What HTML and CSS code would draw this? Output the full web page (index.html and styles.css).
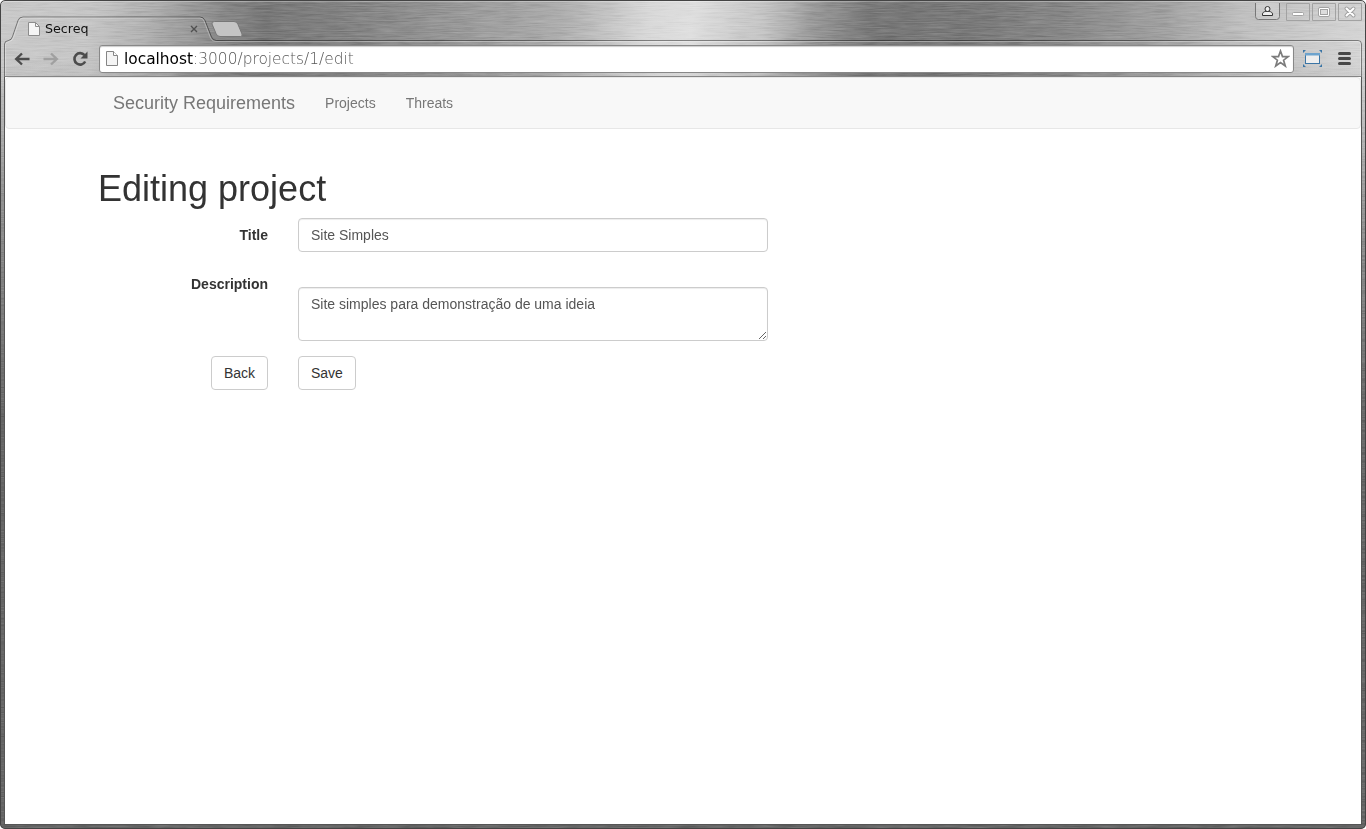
FILE: index.html
```html
<!DOCTYPE html>
<html lang="en">
<head>
<meta charset="utf-8">
<title>Secreq</title>
<link rel="stylesheet" href="styles.css">
</head>
<body>
<div class="window">
  <svg class="metal" width="1366" height="829" aria-hidden="true">
    <defs>
      <filter id="brushed" x="0" y="0" width="100%" height="100%" color-interpolation-filters="sRGB">
        <feTurbulence type="fractalNoise" baseFrequency="0.04 0.8" numOctaves="3" seed="4"/>
        <feColorMatrix values="1 0 0 0 0  1 0 0 0 0  1 0 0 0 0  0 0 0 0 1"/>
      </filter>
    </defs>
    <rect width="1366" height="829" filter="url(#brushed)"/>
  </svg>
  <header class="titlebar">
    <svg class="frame-lines" width="1366" height="77" fill="none" aria-hidden="true">
      <path d="M4.5 77V44q0-3 4-3.500 3-.5 4-4L18 20.500q1-3.500 5-3.500H200q3.500 0 5 3.500L211.500 37q1.500 3.500 5 3.500H1358q3.500 0 3.500 3.500V77" stroke="#000" stroke-opacity=".42"/>
      <path d="M5.500 77V44.500q0-2.500 4-3 3-.5 4-4L19 21.500q1-3.500 4-3.500H200q3 0 4 3L210.500 38q1.500 3.500 5 3.500H1358q2.500 0 2.500 3V77" stroke="#fff" stroke-opacity=".3"/>
      <path d="M214.500 21.500H234q3 0 4 3l4 9.500q.7 2.500-1.500 2.500H220q-3 0-4-3l-4-9.500q-.7-2.500 2.500-2.500Z" fill="#c4c4c4" stroke="#777"/>
    </svg>
    <div class="tab">
      <svg width="12" height="14" viewBox="0 0 12 14"><path d="M.5.5h7l4 4v9H.5Z" fill="#f5f5f5" stroke="#8c8c8c"/><path d="M7.500.5v4h4" fill="none" stroke="#8c8c8c"/></svg>
      <span class="tab-title">Secreq</span>
      <svg class="tab-close" width="8" height="8" viewBox="0 0 8 8"><path d="M1 1l6 6M7 1L1 7" stroke="#505050" stroke-width="1.400"/></svg>
    </div>
    <div class="controls">
      <svg class="user" width="25" height="20" viewBox="0 0 25 20" fill="none"><path d="M.5 0v13.500q0 3 3 3h18q3 0 3-3V0" stroke="#777" fill="#fff" fill-opacity=".15"/><path d="M10.800 8.500h3.400c2 0 3.300 1.300 3.300 2.500v1.500h-10V11c0-1.200 1.300-2.500 3.300-2.500Z" fill="#eee" stroke="#333"/><circle cx="12.500" cy="6" r="2.500" fill="#eee" stroke="#333"/></svg>
      <svg width="24" height="18" viewBox="0 0 24 18" fill="none"><path d="M.5.5h23v17H.5Z" stroke="#a2a2a2"/><rect x="6.500" y="9.500" width="11" height="3" rx="1" fill="#fff" stroke="#a2a2a2"/></svg>
      <svg width="24" height="18" viewBox="0 0 24 18" fill="none"><path d="M.5.5h23v17H.5Z" stroke="#a2a2a2"/><rect x="6.500" y="4.500" width="11" height="9" rx="1.500" fill="#fff" stroke="#a2a2a2"/><rect x="8.500" y="6.500" width="7" height="5" fill="#ddd" stroke="#a2a2a2"/></svg>
      <svg width="24" height="18" viewBox="0 0 24 18" fill="none"><path d="M.5.5h23v17H.5Z" stroke="#a2a2a2"/><path d="M8.500 5.500l7 7M15.500 5.500l-7 7" stroke="#a2a2a2" stroke-width="4" stroke-linecap="round"/><path d="M8.500 5.500l7 7M15.500 5.500l-7 7" stroke="#fff" stroke-width="2" stroke-linecap="round"/></svg>
    </div>
  </header>
  <div class="toolbar">
    <svg class="back" width="16" height="14" viewBox="0 0 16 14" fill="none"><path d="M8 1.500L2.200 7 8 12.500M2 7h13.500" stroke="#4c4c4c" stroke-width="2.400"/></svg>
    <svg class="forward" width="16" height="14" viewBox="0 0 16 14" fill="none"><path d="M8 1.500L13.800 7 8 12.500M14 7H.5" stroke="#a0a0a0" stroke-width="2.400"/></svg>
    <svg class="reload" width="17" height="16" viewBox="0 0 17 16" fill="none"><path d="M12.500 4.200A5.700 5.700 0 1 0 13.200 10.500" stroke="#4c4c4c" stroke-width="2.600"/><path d="M15.500.5v7h-7Z" fill="#4c4c4c"/></svg>
    <div class="address">
      <svg width="12" height="15" viewBox="0 0 12 15"><path d="M.5.5h7l4 4v10H.5Z" fill="#f4f4f4" stroke="#858585"/><path d="M7.500.5v4h4" fill="#fff" stroke="#858585"/></svg>
      <span class="url"><span class="host">localhost</span>:3000/projects/1/edit</span>
      <svg class="star" width="19" height="19" viewBox="0 0 19 19"><path d="M9.500 2l2 5.600h5.700l-4.600 3.600 1.700 5.800-4.800-3.500L4.700 17l1.700-5.800L1.800 7.600h5.700Z" fill="#fff" stroke="#7c7c7c" stroke-width="1.700"/></svg>
    </div>
    <svg class="capture" width="19" height="17" viewBox="0 0 19 17"><path d="M0 0h3L0 3ZM19 0h-3l3 3ZM0 17h3l-3-3ZM19 17h-3l3-3Z" fill="#3b75a5"/><rect x="2.500" y="3.500" width="14" height="10" fill="#eee" stroke="#3b75a5"/><path d="M2 3h15v2.500H2Z" fill="#6da3cd"/></svg>
    <svg class="menu" width="13" height="13" viewBox="0 0 13 13"><path d="M1.500 1.500h10M1.500 6.500h10M1.500 11.500h10" stroke="#484848" stroke-width="3" stroke-linecap="round"/></svg>
  </div>
  <main class="page">
    <nav class="navbar">
      <a class="brand">Security Requirements</a>
      <a class="link">Projects</a>
      <a class="link">Threats</a>
    </nav>
    <section class="content">
      <h1>Editing project</h1>
      <form class="form">
        <label class="label" for="title">Title</label>
        <input class="control" id="title" type="text" value="Site Simples">
        <label class="label label-description" for="description">Description</label>
        <textarea class="control area" id="description" rows="2">Site simples para demonstração de uma ideia</textarea>
        <button class="button button-back" type="button">Back</button>
        <button class="button button-save" type="button">Save</button>
      </form>
    </section>
  </main>
</div>
</body>
</html>
```
FILE: styles.css
```css
* { box-sizing: border-box; }
body {
  margin: 0;
  background: #fff;
  overflow: hidden;
  font: 14px/20px "Liberation Sans", Arial, sans-serif;
  color: #333;
}
svg { display: block; flex: none; }

.window {
  position: relative;
  isolation: isolate;
  display: flex;
  flex-direction: column;
  width: 1366px;
  height: 829px;
  padding: 0 5px 5px;
  border-radius: 5px;
  overflow: hidden;
  background:
    linear-gradient(180deg, transparent 60px, rgba(90, 90, 90, .5) 200px, #666 420px),
    linear-gradient(97deg, #c9c9c9 0, #c6c6c6 90px, #b0b0b0 150px, #878787 225px, #787878 270px, #858585 360px, #999 460px, #adadad 560px, #d8d8d8 645px, #dedede 690px, #c4c4c4 760px, #939393 820px, #777 870px, #7a7a7a 970px, #888 1060px, #a2a2a2 1160px, #c0c0c0 1240px, #d6d6d6 1366px);
}
.window::after {
  content: "";
  position: absolute;
  inset: 0;
  border: 1px solid #444;
  border-radius: 5px;
  box-shadow: inset 0 1px rgba(255, 255, 255, .3);
  pointer-events: none;
}
.metal {
  position: absolute;
  inset: 0;
  z-index: -1;
  mix-blend-mode: soft-light;
  opacity: .35;
}

/* Browser frame */
.titlebar {
  position: relative;
  display: flex;
  justify-content: space-between;
  flex: none;
  height: 41px;
}
.frame-lines { position: absolute; left: -5px; top: 0; z-index: -1; }
.tab {
  display: flex;
  align-items: center;
  width: 195px;
  height: 24px;
  margin-top: 17px;
  padding: 0 0 0 23px;
  font: 12.700px/20px "DejaVu Sans", sans-serif;
  color: #111;
}
.tab-title { margin-left: 5px; }
.tab-close { margin-left: auto; margin-right: 2px; }
.controls {
  display: flex;
  gap: 2px;
  margin-right: -1px;
  padding-top: 3px;
}
.user { margin-right: 4px; }
.toolbar {
  display: flex;
  align-items: center;
  flex: none;
  height: 36px;
  padding: 0 10px 0 9px;
  border-bottom: 1px solid #858585;
}
.forward { margin-left: 13px; }
.reload { margin-left: 13px; }
.address {
  display: flex;
  align-items: center;
  width: 1195px;
  height: 28px;
  margin-left: 10px;
  padding: 0 3px 0 6px;
  background: #fff;
  border: 1px solid #888;
  border-radius: 3px;
  box-shadow: inset 0 1px 1px #ccc;
}
.url {
  margin-left: 6px;
  font: 200 15.400px/20px "DejaVu Sans", sans-serif;
  color: #555;
}
.host { font-weight: 400; color: #000; }
.star { margin-left: auto; }
.capture { margin-left: 9px; }
.menu { margin-left: auto; }

/* Web page */
.page {
  flex: 1;
  width: 1356px;
  background: #fff;
  box-shadow: 0 0 0 1px #555;
  clip-path: inset(0 -1px -1px -1px);
}
.navbar {
  display: flex;
  align-items: center;
  height: 52px;
  padding: 0 108px;
  background: #f8f8f8;
  border: 1px solid #e7e7e7;
  border-radius: 4px;
  color: #777;
}
.brand { margin-left: -1px; padding: 0 15px 1px 0; font-size: 18px; }
.link { padding: 0 15px; }
.content { padding: 40px 93px 0; }
h1 {
  margin: 0 0 10px;
  font-size: 36px;
  font-weight: 500;
  line-height: 39px;
}
.form {
  display: grid;
  grid-template-columns: 170px 470px;
  grid-template-rows: 34px 54px 34px;
  column-gap: 30px;
  row-gap: 35px;
}
.label { padding-top: 7px; text-align: right; font-weight: 700; }
.label-description { margin-top: -13px; padding-top: 0; }
.control {
  display: block;
  width: 100%;
  height: 34px;
  margin: 0;
  padding: 6px 12px;
  font: inherit;
  color: #555;
  background: #fff;
  border: 1px solid #ccc;
  border-radius: 4px;
  box-shadow: inset 0 1px 1px rgba(0, 0, 0, .075);
  outline: 0;
}
.area { height: 54px; overflow: auto; resize: vertical; }
.button {
  height: 34px;
  margin: -20px 0 0;
  padding: 6px 12px;
  font: inherit;
  color: #333;
  background: #fff;
  border: 1px solid #ccc;
  border-radius: 4px;
}
.button-back { justify-self: end; }
.button-save { justify-self: start; }
```
